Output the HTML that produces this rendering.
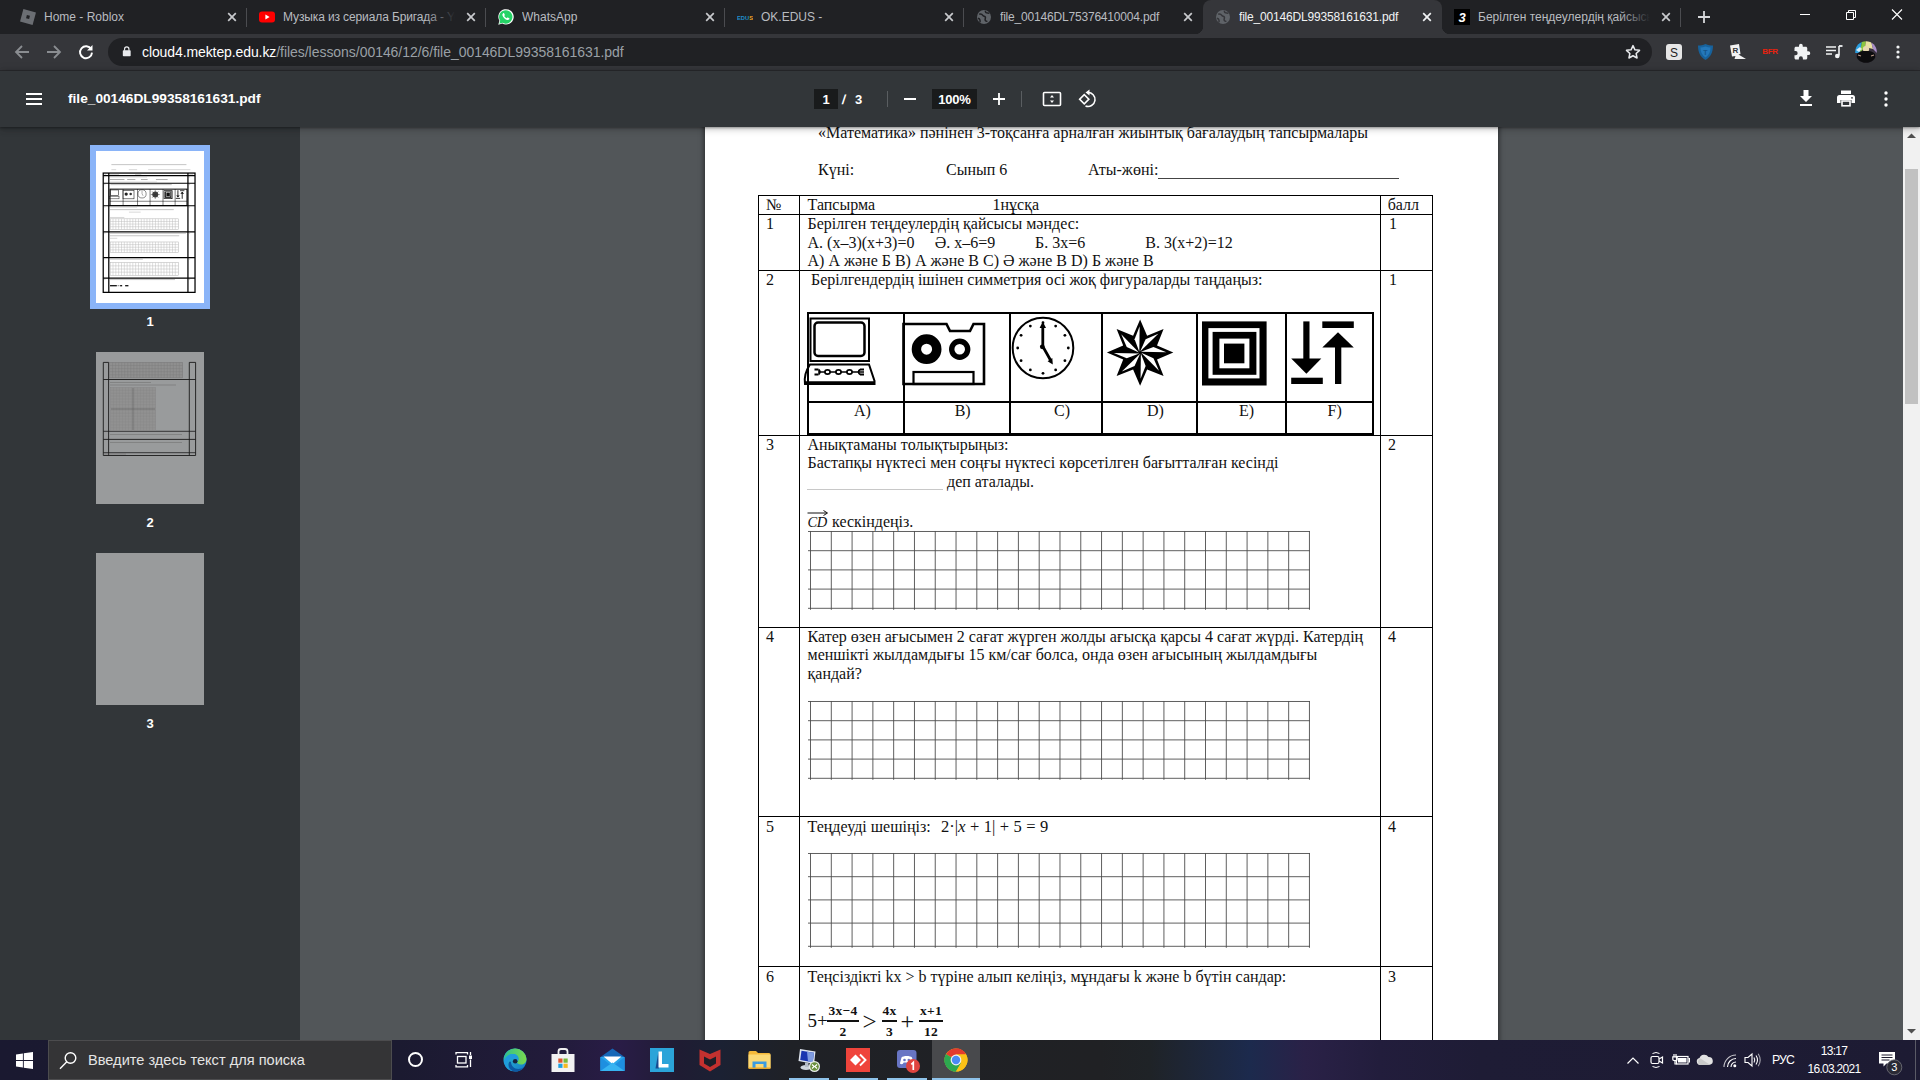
<!DOCTYPE html>
<html><head><meta charset="utf-8">
<style>
*{box-sizing:border-box;margin:0;padding:0}
html,body{width:1920px;height:1080px;overflow:hidden;background:#525659;font-family:"Liberation Sans",sans-serif}
.abs{position:absolute}
#tabstrip{position:absolute;left:0;top:0;width:1920px;height:34px;background:#202124}
#toolbar{position:absolute;left:0;top:34px;width:1920px;height:37px;background:#35363a;border-bottom:1px solid #2a2b2e}
#omni{position:absolute;left:108px;top:4px;width:1544px;height:28px;border-radius:14px;background:#202124}
.tab{position:absolute;top:0;height:34px;width:239px;color:#b9bcc0;font-size:12px;line-height:34px;white-space:nowrap}
.tab .t{position:absolute;left:36px;top:0;width:172px;overflow:hidden;height:34px}
.tab .fade{position:absolute;left:178px;top:0;width:30px;height:34px;background:linear-gradient(90deg,rgba(32,33,36,0),#202124)}
.tab .x{position:absolute;left:218px;top:11px;width:12px;height:12px}
.tab .sep{position:absolute;left:238px;top:8px;width:1px;height:19px;background:#4b4c50}
.tab.act{background:#35363a;border-radius:8px 8px 0 0;color:#f1f3f4}
.tab .fav{position:absolute;left:12px;top:9px;width:16px;height:16px}
#pdfbar{position:absolute;left:0;top:71px;width:1920px;height:56px;background:#323639;box-shadow:0 -2px 8px rgba(0,0,0,.09),0 4px 8px rgba(0,0,0,.06),0 1px 2px rgba(0,0,0,.3),0 2px 6px rgba(0,0,0,.15);z-index:5}
#side{position:absolute;left:0;top:127px;width:300px;height:913px;background:#323639}
#view{position:absolute;left:300px;top:127px;width:1604px;height:913px;background:#525659;overflow:hidden}
#vscroll{position:absolute;left:1903px;top:127px;width:17px;height:913px;background:#f1f1f1}
#page{position:absolute;left:405px;top:-10px;width:793px;height:1000px;background:#fff;box-shadow:0 0 6px 2px rgba(0,0,0,.45)}
#taskbar{position:absolute;left:0;top:1040px;width:1920px;height:40px;z-index:10;background:linear-gradient(90deg,#1a1930 0,#1b1a30 400px,#221b3b 560px,#291c46 620px,#1f1c33 680px,#1b2133 720px,#1f2126 790px,#202124 1100px,#1f2327 1150px,#1c2a4d 1250px,#2a2147 1305px,#221d3c 1380px,#1e1c35 1480px,#1d1b33 1920px)}
.w{color:#fff}
#doc{position:absolute;left:-300px;top:-127px;width:1920px;height:1300px}
.tx{position:absolute;white-space:pre;font-family:"Liberation Serif",serif;font-size:16px;line-height:18px;color:#111}
.fr{text-align:center;font-size:13.500px;font-weight:bold;letter-spacing:0.300px}
</style></head><body>

<div id="tabstrip">
<div class="tab" style="left:8px"><svg class="fav" viewBox="0 0 16 16"><g transform="rotate(15 8 8)"><rect x="1.5" y="1.5" width="13" height="13" fill="#6b6e73"/><rect x="6.400" y="6.400" width="3.200" height="3.200" fill="#202124"/></g></svg><div class="t">Home - Roblox</div><svg class="x" viewBox="0 0 12 12"><path d="M2.2 2.2L9.8 9.8M9.8 2.2L2.2 9.8" stroke="#c8cacd" stroke-width="1.7" fill="none"/></svg><div class="sep"></div></div>
<div class="tab" style="left:247px"><svg class="fav" viewBox="0 0 16 16"><rect x="0" y="2.500" width="16" height="11" rx="3" fill="#f00"/><path d="M6.400 5.500L10.600 8L6.400 10.500z" fill="#fff"/></svg><div class="t" style="letter-spacing:-0.120px">Музыка из сериала Бригада - YouTube</div><div class="fade"></div><svg class="x" viewBox="0 0 12 12"><path d="M2.2 2.2L9.8 9.8M9.8 2.2L2.2 9.8" stroke="#c8cacd" stroke-width="1.7" fill="none"/></svg><div class="sep"></div></div>
<div class="tab" style="left:486px"><svg class="fav" viewBox="0 0 16 16"><path d="M0.300 15.700L1.400 11.800A7.700 7.700 0 1 1 4.300 14.600z" fill="#fff"/><path d="M1.300 14.700L2.200 11.700A6.700 6.700 0 1 1 4.500 13.800z" fill="#25d366"/><path d="M5.200 4.300c.3-.3.800-.3 1 .1l.6 1.300c.1.300 0 .6-.2.800l-.4.400c.5 1 1.300 1.800 2.400 2.400l.5-.5c.2-.2.500-.3.800-.2l1.300.6c.4.200.4.700.1 1-.5.700-1.400 1-2.300.7-2.300-.7-4-2.400-4.600-4.600-.2-.8.200-1.500.8-2z" fill="#fff"/></svg><div class="t">WhatsApp</div><svg class="x" viewBox="0 0 12 12"><path d="M2.2 2.2L9.8 9.8M9.8 2.2L2.2 9.8" stroke="#c8cacd" stroke-width="1.7" fill="none"/></svg><div class="sep"></div></div>
<div class="tab" style="left:725px"><svg class="fav" viewBox="0 0 16 16"><text x="0" y="10.500" font-family="Liberation Sans" font-weight="bold" font-size="5.800" fill="#1f8ecd" textLength="16" lengthAdjust="spacingAndGlyphs">EDU<tspan fill="#f5a623">S</tspan></text></svg><div class="t">OK.EDUS -</div><svg class="x" viewBox="0 0 12 12"><path d="M2.2 2.2L9.8 9.8M9.8 2.2L2.2 9.8" stroke="#c8cacd" stroke-width="1.7" fill="none"/></svg><div class="sep"></div></div>
<div class="tab" style="left:964px"><svg class="fav" viewBox="0 0 16 16"><circle cx="8" cy="8" r="7" fill="#5f6368"/><path d="M3.2 5.2c1.5-.6 3 .2 3.6 1.2.7 1.2 2.2.6 2.6 1.8.3 1-.6 1.8-.2 3 .3.9 1.3 1.2 2.2.9M9.5 1.8c-.4 1 .3 1.800 1.200 2.100 1 .3 1.900-.1 2.500.7M2 9.300c1 .2 1.800.9 2 1.900.1.800-.2 1.500.3 2.200" stroke="#202124" stroke-width="1.500" fill="none"/></svg><div class="t" style="letter-spacing:-0.190px">file_00146DL75376410004.pdf</div><svg class="x" viewBox="0 0 12 12"><path d="M2.2 2.2L9.8 9.8M9.8 2.2L2.2 9.8" stroke="#c8cacd" stroke-width="1.7" fill="none"/></svg></div>
<div class="tab act" style="left:1203px"><div class="abs" style="left:-8px;top:26px;width:8px;height:8px;background:radial-gradient(circle at 0 0,rgba(0,0,0,0) 8px,#35363a 8.500px)"></div><div class="abs" style="left:239px;top:26px;width:8px;height:8px;background:radial-gradient(circle at 100% 0,rgba(0,0,0,0) 8px,#35363a 8.500px)"></div><svg class="fav" viewBox="0 0 16 16"><circle cx="8" cy="8" r="7" fill="#5f6368"/><path d="M3.2 5.2c1.5-.6 3 .2 3.6 1.2.7 1.2 2.2.6 2.6 1.8.3 1-.6 1.8-.2 3 .3.9 1.3 1.2 2.2.9M9.5 1.8c-.4 1 .3 1.800 1.200 2.100 1 .3 1.900-.1 2.500.7M2 9.300c1 .2 1.800.9 2 1.900.1.800-.2 1.500.3 2.200" stroke="#35363a" stroke-width="1.500" fill="none"/></svg><div class="t" style="letter-spacing:-0.190px">file_00146DL99358161631.pdf</div><svg class="x" viewBox="0 0 12 12"><path d="M2.2 2.2L9.8 9.8M9.8 2.2L2.2 9.8" stroke="#f1f3f4" stroke-width="1.7" fill="none"/></svg></div>
<div class="tab" style="left:1442px"><svg class="fav" viewBox="0 0 16 16"><rect width="16" height="16" fill="#000"/><text x="8" y="13" text-anchor="middle" font-family="Liberation Sans" font-weight="bold" font-style="italic" font-size="13" fill="#fff">3</text></svg><div class="t">Берілген теңдеулердің қайсысы мәндес</div><div class="fade"></div><svg class="x" viewBox="0 0 12 12"><path d="M2.2 2.2L9.8 9.8M9.8 2.2L2.2 9.8" stroke="#c8cacd" stroke-width="1.7" fill="none"/></svg><div class="sep"></div></div>
<svg class="abs" style="left:1697px;top:10px" width="14" height="14" viewBox="0 0 14 14"><path d="M7 1v12M1 7h12" stroke="#d5d7da" stroke-width="1.800"/></svg>
<svg class="abs" style="left:1799px;top:9px" width="110" height="12" viewBox="0 0 110 12"><path d="M1 5.500h10" stroke="#fff" stroke-width="1"/><path d="M47.500 3.500h7v7h-7zM49.500 3.500v-2h7v7h-2" stroke="#fff" stroke-width="1" fill="none"/><path d="M93 0.500l10 10M103 0.500l-10 10" stroke="#fff" stroke-width="1.100"/></svg>
</div>
<div id="toolbar"><div id="omni">
<svg class="abs" style="left:13.500px;top:8px" width="9.500" height="11" viewBox="0 0 12 14"><path d="M3.200 6V4a2.800 2.800 0 0 1 5.600 0v2" stroke="#e8eaed" stroke-width="1.500" fill="none"/><rect x="1" y="5.500" width="10" height="7.500" rx="1" fill="#e8eaed"/></svg>
<div class="abs" style="left:34px;top:0;height:28px;line-height:29px;font-size:14px;color:#fff;white-space:nowrap;letter-spacing:-0.100px">cloud4.mektep.edu.kz<span style="color:#9aa0a6;letter-spacing:-0.040px">/files/lessons/00146/12/6/file_00146DL99358161631.pdf</span></div>
<svg class="abs" style="left:1516px;top:5px" width="18" height="18" viewBox="0 0 24 24"><path d="M12 3.500l2.600 5.600 6.100.7-4.500 4.200 1.200 6-5.400-3-5.400 3 1.200-6-4.500-4.200 6.100-.7z" stroke="#e8eaed" stroke-width="2" fill="none" stroke-linejoin="round"/></svg>
</div>
<svg class="abs" style="left:12px;top:9px" width="20" height="18" viewBox="0 0 20 18"><path d="M17 9H4.500M10 3L4 9l6 6" stroke="#8a8d91" stroke-width="1.800" fill="none"/></svg>
<svg class="abs" style="left:44px;top:9px" width="20" height="18" viewBox="0 0 20 18"><path d="M3 9h12.500M10 3l6 6-6 6" stroke="#8a8d91" stroke-width="1.800" fill="none"/></svg>
<svg class="abs" style="left:77px;top:9px" width="18" height="18" viewBox="0 0 18 18"><path d="M14.200 6.200A6 6 0 1 0 15 9.600" stroke="#fff" stroke-width="1.900" fill="none"/><path d="M15.500 2v5.500H10z" fill="#fff"/></svg>
<!-- extensions -->
<svg class="abs" style="left:1666px;top:10px" width="16" height="16" viewBox="0 0 16 16"><rect width="16" height="16" rx="3" fill="#e6e6e6"/><text x="8" y="12.500" text-anchor="middle" font-family="Liberation Sans" font-size="12" fill="#222">S</text></svg>
<svg class="abs" style="left:1697px;top:9px" width="17" height="18" viewBox="0 0 17 18"><path d="M8.500 1c2.500 1.200 5 1.600 7.500 1.600 0 6.500-2 11.400-7.500 14.400C3 14 1 9.100 1 2.600 3.500 2.600 6 2.200 8.500 1z" fill="#17629c"/><path d="M8.500 3.500c1.700.8 3.400 1.100 5 1.100 0 4.500-1.400 7.800-5 9.900-3.600-2.100-5-5.400-5-9.900 1.600 0 3.300-.3 5-1.100z" fill="#2478ba"/><text x="8.500" y="11.500" text-anchor="middle" font-family="Liberation Sans" font-weight="bold" font-size="7" fill="#15558a">T</text></svg>
<svg class="abs" style="left:1729px;top:10px" width="18" height="16" viewBox="0 0 18 16"><path d="M1 1.500l9-1.500 1.500 10-2 .5 7.500 4.500H5.500l1-3-3.500.5z" fill="#f2f2f2"/><text x="3.500" y="9" font-family="Liberation Sans" font-weight="bold" font-size="8" fill="#35363a">R</text></svg>
<div class="abs" style="left:1761px;top:12px;width:18px;font-size:8px;line-height:12px;font-weight:bold;color:#e8220f;letter-spacing:-0.300px;text-align:center">BFR</div>
<svg class="abs" style="left:1793px;top:9px" width="18" height="18" viewBox="0 0 24 24"><path d="M20.500 11H19V7c0-1.100-.9-2-2-2h-4V3.500a2.500 2.500 0 0 0-5 0V5H4c-1.100 0-2 .9-2 2v3.800h1.500a2.700 2.700 0 0 1 0 5.400H2V20c0 1.100.9 2 2 2h3.800v-1.500a2.700 2.700 0 0 1 5.400 0V22H17c1.100 0 2-.9 2-2v-4h1.500a2.500 2.500 0 0 0 0-5z" fill="#f1f3f4"/></svg>
<svg class="abs" style="left:1825px;top:10px" width="18" height="16" viewBox="0 0 18 16"><path d="M1 3h10M1 6.500h10M1 10h6" stroke="#f1f3f4" stroke-width="1.600"/><path d="M14 2v9.500" stroke="#f1f3f4" stroke-width="1.600"/><path d="M14 2h3.500" stroke="#f1f3f4" stroke-width="1.800"/><circle cx="12.300" cy="12" r="2.300" fill="#f1f3f4"/></svg>
<svg class="abs" style="left:1855px;top:7px" width="22" height="22" viewBox="0 0 22 22"><defs><clipPath id="avc"><circle cx="11" cy="11" r="10.800"/></clipPath></defs><g clip-path="url(#avc)"><rect width="22" height="22" fill="#3a3340"/><path d="M0 0h7l-2 12H0z" fill="#2a9fe0"/><path d="M7 0h4l-1 6-5 6z" fill="#8cc63f"/><path d="M11 0h5l2 8-8-2z" fill="#e9e2a0"/><path d="M16 0h6v12l-4-4z" fill="#a98fc8"/><path d="M1 9l4-3 2 2-3 3z" fill="#fff" opacity=".8"/><ellipse cx="11" cy="8" rx="3.200" ry="3" fill="#e8d9b0"/><path d="M2 13c2-2.500 5-3 9-3s7 .5 9 3l1 9H1z" fill="#0c0c0e"/><path d="M3 14l3 1M19 14l-3 1" stroke="#b98" stroke-width="1.200"/></g></svg>
<svg class="abs" style="left:1896px;top:10px" width="4" height="16" viewBox="0 0 4 16"><circle cx="2" cy="3" r="1.600" fill="#f1f3f4"/><circle cx="2" cy="8" r="1.600" fill="#f1f3f4"/><circle cx="2" cy="13" r="1.600" fill="#f1f3f4"/></svg>
</div>
<div id="pdfbar">
<svg class="abs" style="left:26px;top:22px" width="16" height="12" viewBox="0 0 16 12"><path d="M0 1h16M0 6h16M0 11h16" stroke="#fff" stroke-width="2"/></svg>
<div class="abs w" style="left:68px;top:18px;font-size:13.700px;line-height:20px;font-weight:bold;white-space:nowrap" id="ttl">file_00146DL99358161631.pdf</div>
<div class="abs" style="left:814px;top:18px;width:24px;height:20px;background:#191b1c"></div>
<div class="abs w" style="left:814px;top:19px;width:24px;text-align:center;font-size:13px;line-height:20px;font-weight:bold">1</div>
<div class="abs w" style="left:841.500px;top:19px;font-size:13px;line-height:20px;font-weight:bold;transform:skewX(-8deg)">/</div>
<div class="abs w" style="left:855px;top:19px;font-size:13px;line-height:20px;font-weight:bold">3</div>
<div class="abs" style="left:887px;top:20px;width:1px;height:16px;background:#5a5e61"></div>
<div class="abs" style="left:904px;top:27px;width:12px;height:2px;background:#fff"></div>
<div class="abs" style="left:932px;top:18px;width:45px;height:20px;background:#191b1c"></div>
<div class="abs w" style="left:932px;top:18px;width:45px;text-align:center;font-size:13px;line-height:22px;font-weight:bold;letter-spacing:-0.200px">100%</div>
<svg class="abs" style="left:993px;top:22px" width="12" height="12" viewBox="0 0 12 12"><path d="M6 0v12M0 6h12" stroke="#fff" stroke-width="1.800"/></svg>
<div class="abs" style="left:1021px;top:20px;width:1px;height:16px;background:#5a5e61"></div>
<svg class="abs" style="left:1042px;top:20px" width="20" height="16" viewBox="0 0 20 16"><rect x="1.500" y="1.500" width="17" height="13" rx="1" stroke="#fff" stroke-width="1.600" fill="none"/><path d="M10 4l2 2.500H8zM10 12l2-2.500H8z" fill="#fff"/></svg>
<svg class="abs" style="left:1078px;top:17px" width="20" height="21" viewBox="0 0 20 21"><rect x="3" y="8" width="6.500" height="6.500" transform="rotate(-45 6.250 11.250)" stroke="#fff" stroke-width="1.600" fill="none"/><path d="M9.500 4.500a7 7 0 1 1-2 13.500" stroke="#fff" stroke-width="1.600" fill="none"/><path d="M11.500 1.500v6L7.500 4.500z" fill="#fff"/></svg>
<svg class="abs" style="left:1799px;top:19px" width="14" height="17" viewBox="0 0 14 17"><path d="M4.500 0h5v6H13l-6 6-6-6h3.500z" fill="#fff"/><rect x="1" y="14" width="12" height="2" fill="#fff"/></svg>
<svg class="abs" style="left:1837px;top:19px" width="18" height="17" viewBox="0 0 18 17"><rect x="4" y="0.500" width="10" height="3.500" fill="#fff"/><path d="M2.500 5h13A2.500 2.500 0 0 1 18 7.500V13h-3.500v-3h-11v3H0V7.500A2.500 2.500 0 0 1 2.500 5z" fill="#fff"/><rect x="5" y="11" width="8" height="4.800" stroke="#fff" stroke-width="1.600" fill="none"/><circle cx="15" cy="7.800" r="0.900" fill="#323639"/></svg>
<svg class="abs" style="left:1884px;top:20px" width="4" height="16" viewBox="0 0 4 16"><circle cx="2" cy="2" r="1.700" fill="#fff"/><circle cx="2" cy="8" r="1.700" fill="#fff"/><circle cx="2" cy="14" r="1.700" fill="#fff"/></svg>
</div>
<div id="side"><div class="abs" style="left:90px;top:18px;width:120px;height:164px;background:#8ab4f8"></div><div class="abs" style="left:96px;top:24px;width:108px;height:152px;background:#fff"></div><svg class="abs" style="left:96px;top:24px" width="108" height="152" viewBox="96 151 108 152"><g stroke="#000" fill="none"><rect x="103.22" y="173.06" width="91.80" height="119.31" stroke-width="1.250"/><path d="M108.80 173.06V292.38M187.94 173.06V292.38" stroke-width="1.250"/><path d="M103.22 175.65H195.02" stroke-width="1.150"/><path d="M103.22 183.28H195.02" stroke-width="1.150"/><path d="M103.22 205.75H195.02" stroke-width="1.150"/><path d="M103.22 231.90H195.02" stroke-width="1.150"/><path d="M103.22 257.64H195.02" stroke-width="1.150"/><path d="M103.22 278.07H195.02" stroke-width="1.150"/><rect x="110.03" y="189.14" width="76.95" height="16.48" stroke-width="1"/><path d="M110.03 201.26H186.98" stroke-width="0.500"/><path d="M123.10 189.14V205.62" stroke-width="0.500"/><path d="M137.54 189.14V205.62" stroke-width="0.500"/><path d="M150.07 189.14V205.62" stroke-width="0.500"/><path d="M163.01 189.14V205.62" stroke-width="0.500"/><path d="M175.13 189.14V205.62" stroke-width="0.500"/></g><rect x="110.44" y="189.95" width="7.90" height="5.72" fill="none" stroke="#222" stroke-width="0.600"/><rect x="109.62" y="196.22" width="9.40" height="2.59" fill="none" stroke="#222" stroke-width="0.500"/><rect x="122.97" y="190.63" width="11.03" height="8.17" fill="none" stroke="#222" stroke-width="0.600"/><circle cx="126.18" cy="194.04" r="1.63" fill="#222"/><circle cx="130.69" cy="194.04" r="1.23" fill="#333"/><circle cx="142.04" cy="193.90" r="4.09" fill="none" stroke="#222" stroke-width="0.500"/><path d="M142.04 190.77V193.77L143.13 195.81" stroke="#333" stroke-width="0.400" fill="none"/><circle cx="155.25" cy="194.54" r="3.00" fill="#444"/><path d="M150.75 194.54H159.74M155.25 190.09V198.94M152.11 191.45L158.38 197.72M158.38 191.45L152.11 197.72" stroke="#333" stroke-width="0.500"/><rect x="163.69" y="190.28" width="8.80" height="8.72" fill="#111"/><rect x="164.64" y="191.25" width="6.88" height="6.81" fill="none" stroke="#ddd" stroke-width="0.500"/><rect x="166.14" y="192.68" width="3.95" height="3.95" fill="none" stroke="#ddd" stroke-width="0.600"/><path d="M177.91 190.23V197.17M182.21 192.00V198.81" stroke="#111" stroke-width="0.900"/><path d="M175.81 198.40H180.17M180.04 190.70H184.39" stroke="#111" stroke-width="0.800"/><path d="M176.09 195.54H179.76L177.91 197.31ZM180.31 193.77H184.12L182.21 191.86Z" fill="#111"/><path d="M111.39 164.62H186.44" stroke="#a0a0a0" stroke-width="0.6"/><path d="M111.39 169.66H116.16" stroke="#b0b0b0" stroke-width="0.5"/><path d="M128.82 169.66H137.13" stroke="#b0b0b0" stroke-width="0.5"/><path d="M148.16 169.66H190.39" stroke="#b0b0b0" stroke-width="0.5"/><path d="M104.31 174.43H106.22" stroke="#b0b0b0" stroke-width="0.5"/><path d="M109.89 174.43H119.15" stroke="#b0b0b0" stroke-width="0.5"/><path d="M135.09 174.43H141.35" stroke="#b0b0b0" stroke-width="0.5"/><path d="M189.02 174.43H193.11" stroke="#b0b0b0" stroke-width="0.5"/><path d="M109.89 177.01H146.94" stroke="#b0b0b0" stroke-width="0.5"/><path d="M109.89 179.53H124.47" stroke="#8c8c8c" stroke-width="0.7"/><path d="M127.19 179.53H135.36" stroke="#8c8c8c" stroke-width="0.7"/><path d="M140.95 179.53H147.62" stroke="#8c8c8c" stroke-width="0.7"/><path d="M155.93 179.53H167.64" stroke="#8c8c8c" stroke-width="0.7"/><path d="M109.89 182.05H156.88" stroke="#b0b0b0" stroke-width="0.5"/><path d="M110.44 184.64H171.73" stroke="#9c9c9c" stroke-width="0.6"/><path d="M109.89 207.11H137.13" stroke="#b0b0b0" stroke-width="0.5"/><path d="M109.89 209.63H173.77" stroke="#9c9c9c" stroke-width="0.6"/><path d="M128.96 212.15H140.67" stroke="#b0b0b0" stroke-width="0.5"/><path d="M109.89 217.47H124.33" stroke="#b0b0b0" stroke-width="0.5"/><path d="M109.89 233.26H185.89" stroke="#9c9c9c" stroke-width="0.6"/><path d="M109.89 235.78H179.22" stroke="#9c9c9c" stroke-width="0.6"/><path d="M109.89 238.30H117.25" stroke="#b0b0b0" stroke-width="0.5"/><path d="M109.89 259.14H142.85" stroke="#a0a0a0" stroke-width="0.6"/><path d="M109.89 279.57H175.00" stroke="#9c9c9c" stroke-width="0.6"/><path d="M110.03 285.70H116.84" stroke="#111" stroke-width="1.3"/><path d="M117.52 285.70H119.43" stroke="#333" stroke-width="0.6"/><path d="M120.11 285.70H122.15" stroke="#111" stroke-width="1.3"/><path d="M125.15 285.70H128.42" stroke="#111" stroke-width="1.3"/><path d="M104.31 177.01H105.40" stroke="#999" stroke-width="0.5"/><path d="M189.02 177.01H190.11" stroke="#999" stroke-width="0.5"/><path d="M104.31 184.64H105.40" stroke="#999" stroke-width="0.5"/><path d="M189.02 184.64H190.11" stroke="#999" stroke-width="0.5"/><path d="M104.31 207.11H105.40" stroke="#999" stroke-width="0.5"/><path d="M189.02 207.11H190.11" stroke="#999" stroke-width="0.5"/><path d="M104.31 233.26H105.40" stroke="#999" stroke-width="0.5"/><path d="M189.02 233.26H190.11" stroke="#999" stroke-width="0.5"/><path d="M104.31 259.14H105.40" stroke="#999" stroke-width="0.5"/><path d="M189.02 259.14H190.11" stroke="#999" stroke-width="0.5"/><path d="M104.31 279.57H105.40" stroke="#999" stroke-width="0.5"/><path d="M189.02 279.57H190.11" stroke="#999" stroke-width="0.5"/><rect x="110.16" y="218.83" width="68.24" height="10.49" fill="#fff" stroke="#b0b0b0" stroke-width="0.500"/><path d="M113.00 218.83V229.31" stroke="#bcbcbc" stroke-width="0.500"/><path d="M115.83 218.83V229.31" stroke="#bcbcbc" stroke-width="0.500"/><path d="M118.66 218.83V229.31" stroke="#bcbcbc" stroke-width="0.500"/><path d="M121.49 218.83V229.31" stroke="#bcbcbc" stroke-width="0.500"/><path d="M124.32 218.83V229.31" stroke="#bcbcbc" stroke-width="0.500"/><path d="M127.15 218.83V229.31" stroke="#bcbcbc" stroke-width="0.500"/><path d="M129.99 218.83V229.31" stroke="#bcbcbc" stroke-width="0.500"/><path d="M132.82 218.83V229.31" stroke="#bcbcbc" stroke-width="0.500"/><path d="M135.65 218.83V229.31" stroke="#bcbcbc" stroke-width="0.500"/><path d="M138.48 218.83V229.31" stroke="#bcbcbc" stroke-width="0.500"/><path d="M141.31 218.83V229.31" stroke="#bcbcbc" stroke-width="0.500"/><path d="M144.14 218.83V229.31" stroke="#bcbcbc" stroke-width="0.500"/><path d="M146.98 218.83V229.31" stroke="#bcbcbc" stroke-width="0.500"/><path d="M149.81 218.83V229.31" stroke="#bcbcbc" stroke-width="0.500"/><path d="M152.64 218.83V229.31" stroke="#bcbcbc" stroke-width="0.500"/><path d="M155.47 218.83V229.31" stroke="#bcbcbc" stroke-width="0.500"/><path d="M158.30 218.83V229.31" stroke="#bcbcbc" stroke-width="0.500"/><path d="M161.13 218.83V229.31" stroke="#bcbcbc" stroke-width="0.500"/><path d="M163.97 218.83V229.31" stroke="#bcbcbc" stroke-width="0.500"/><path d="M166.80 218.83V229.31" stroke="#bcbcbc" stroke-width="0.500"/><path d="M169.63 218.83V229.31" stroke="#bcbcbc" stroke-width="0.500"/><path d="M172.46 218.83V229.31" stroke="#bcbcbc" stroke-width="0.500"/><path d="M175.29 218.83V229.31" stroke="#bcbcbc" stroke-width="0.500"/><path d="M110.16 221.45H178.40" stroke="#bcbcbc" stroke-width="0.500"/><path d="M110.16 224.07H178.40" stroke="#bcbcbc" stroke-width="0.500"/><path d="M110.16 226.69H178.40" stroke="#bcbcbc" stroke-width="0.500"/><rect x="110.16" y="241.98" width="68.24" height="10.49" fill="#fff" stroke="#b0b0b0" stroke-width="0.500"/><path d="M113.00 241.98V252.47" stroke="#bcbcbc" stroke-width="0.500"/><path d="M115.83 241.98V252.47" stroke="#bcbcbc" stroke-width="0.500"/><path d="M118.66 241.98V252.47" stroke="#bcbcbc" stroke-width="0.500"/><path d="M121.49 241.98V252.47" stroke="#bcbcbc" stroke-width="0.500"/><path d="M124.32 241.98V252.47" stroke="#bcbcbc" stroke-width="0.500"/><path d="M127.15 241.98V252.47" stroke="#bcbcbc" stroke-width="0.500"/><path d="M129.99 241.98V252.47" stroke="#bcbcbc" stroke-width="0.500"/><path d="M132.82 241.98V252.47" stroke="#bcbcbc" stroke-width="0.500"/><path d="M135.65 241.98V252.47" stroke="#bcbcbc" stroke-width="0.500"/><path d="M138.48 241.98V252.47" stroke="#bcbcbc" stroke-width="0.500"/><path d="M141.31 241.98V252.47" stroke="#bcbcbc" stroke-width="0.500"/><path d="M144.14 241.98V252.47" stroke="#bcbcbc" stroke-width="0.500"/><path d="M146.98 241.98V252.47" stroke="#bcbcbc" stroke-width="0.500"/><path d="M149.81 241.98V252.47" stroke="#bcbcbc" stroke-width="0.500"/><path d="M152.64 241.98V252.47" stroke="#bcbcbc" stroke-width="0.500"/><path d="M155.47 241.98V252.47" stroke="#bcbcbc" stroke-width="0.500"/><path d="M158.30 241.98V252.47" stroke="#bcbcbc" stroke-width="0.500"/><path d="M161.13 241.98V252.47" stroke="#bcbcbc" stroke-width="0.500"/><path d="M163.97 241.98V252.47" stroke="#bcbcbc" stroke-width="0.500"/><path d="M166.80 241.98V252.47" stroke="#bcbcbc" stroke-width="0.500"/><path d="M169.63 241.98V252.47" stroke="#bcbcbc" stroke-width="0.500"/><path d="M172.46 241.98V252.47" stroke="#bcbcbc" stroke-width="0.500"/><path d="M175.29 241.98V252.47" stroke="#bcbcbc" stroke-width="0.500"/><path d="M110.16 244.60H178.40" stroke="#bcbcbc" stroke-width="0.500"/><path d="M110.16 247.23H178.40" stroke="#bcbcbc" stroke-width="0.500"/><path d="M110.16 249.85H178.40" stroke="#bcbcbc" stroke-width="0.500"/><rect x="110.16" y="262.68" width="68.24" height="12.67" fill="#fff" stroke="#b0b0b0" stroke-width="0.500"/><path d="M113.00 262.68V275.35" stroke="#bcbcbc" stroke-width="0.500"/><path d="M115.83 262.68V275.35" stroke="#bcbcbc" stroke-width="0.500"/><path d="M118.66 262.68V275.35" stroke="#bcbcbc" stroke-width="0.500"/><path d="M121.49 262.68V275.35" stroke="#bcbcbc" stroke-width="0.500"/><path d="M124.32 262.68V275.35" stroke="#bcbcbc" stroke-width="0.500"/><path d="M127.15 262.68V275.35" stroke="#bcbcbc" stroke-width="0.500"/><path d="M129.99 262.68V275.35" stroke="#bcbcbc" stroke-width="0.500"/><path d="M132.82 262.68V275.35" stroke="#bcbcbc" stroke-width="0.500"/><path d="M135.65 262.68V275.35" stroke="#bcbcbc" stroke-width="0.500"/><path d="M138.48 262.68V275.35" stroke="#bcbcbc" stroke-width="0.500"/><path d="M141.31 262.68V275.35" stroke="#bcbcbc" stroke-width="0.500"/><path d="M144.14 262.68V275.35" stroke="#bcbcbc" stroke-width="0.500"/><path d="M146.98 262.68V275.35" stroke="#bcbcbc" stroke-width="0.500"/><path d="M149.81 262.68V275.35" stroke="#bcbcbc" stroke-width="0.500"/><path d="M152.64 262.68V275.35" stroke="#bcbcbc" stroke-width="0.500"/><path d="M155.47 262.68V275.35" stroke="#bcbcbc" stroke-width="0.500"/><path d="M158.30 262.68V275.35" stroke="#bcbcbc" stroke-width="0.500"/><path d="M161.13 262.68V275.35" stroke="#bcbcbc" stroke-width="0.500"/><path d="M163.97 262.68V275.35" stroke="#bcbcbc" stroke-width="0.500"/><path d="M166.80 262.68V275.35" stroke="#bcbcbc" stroke-width="0.500"/><path d="M169.63 262.68V275.35" stroke="#bcbcbc" stroke-width="0.500"/><path d="M172.46 262.68V275.35" stroke="#bcbcbc" stroke-width="0.500"/><path d="M175.29 262.68V275.35" stroke="#bcbcbc" stroke-width="0.500"/><path d="M110.16 265.85H178.40" stroke="#bcbcbc" stroke-width="0.500"/><path d="M110.16 269.02H178.40" stroke="#bcbcbc" stroke-width="0.500"/><path d="M110.16 272.18H178.40" stroke="#bcbcbc" stroke-width="0.500"/></svg><div class="abs w" style="left:90px;top:187px;width:120px;text-align:center;font-size:13px;line-height:16px;font-weight:bold">1</div><div class="abs" style="left:96px;top:225px;width:108px;height:152px;background:#999b9c"></div><svg class="abs" style="left:96px;top:225px" width="108" height="152" viewBox="0 0 108 152"><g fill="none" stroke="#1a1a1a"><path d="M7.300 10.400V103.500M12.600 10.400V103.500M93.300 10.400V103.500M99.600 10.400V103.500" stroke-width="0.900"/><path d="M7.300 10.400H12.600M93.300 10.400H99.600" stroke-width="0.900"/><path d="M7.300 27.5H99.600" stroke-width="0.9"/><path d="M7.300 79.3H99.600" stroke-width="0.8"/><path d="M7.300 87.4H99.600" stroke-width="0.9"/><path d="M7.300 100.7H99.600" stroke-width="0.8"/><path d="M7.300 103.5H99.600" stroke-width="0.9"/></g><rect x="13.500" y="10.400" width="73" height="15.500" fill="#8f8f8f" stroke="#777" stroke-width="0.500"/><path d="M16.54 10.400V25.900" stroke="#7c7c7c" stroke-width="0.400"/><path d="M19.58 10.400V25.900" stroke="#7c7c7c" stroke-width="0.400"/><path d="M22.62 10.400V25.900" stroke="#7c7c7c" stroke-width="0.400"/><path d="M25.66 10.400V25.900" stroke="#7c7c7c" stroke-width="0.400"/><path d="M28.70 10.400V25.900" stroke="#7c7c7c" stroke-width="0.400"/><path d="M31.74 10.400V25.900" stroke="#7c7c7c" stroke-width="0.400"/><path d="M34.78 10.400V25.900" stroke="#7c7c7c" stroke-width="0.400"/><path d="M37.82 10.400V25.900" stroke="#7c7c7c" stroke-width="0.400"/><path d="M40.86 10.400V25.900" stroke="#7c7c7c" stroke-width="0.400"/><path d="M43.90 10.400V25.900" stroke="#7c7c7c" stroke-width="0.400"/><path d="M46.94 10.400V25.900" stroke="#7c7c7c" stroke-width="0.400"/><path d="M49.98 10.400V25.900" stroke="#7c7c7c" stroke-width="0.400"/><path d="M53.02 10.400V25.900" stroke="#7c7c7c" stroke-width="0.400"/><path d="M56.06 10.400V25.900" stroke="#7c7c7c" stroke-width="0.400"/><path d="M59.10 10.400V25.900" stroke="#7c7c7c" stroke-width="0.400"/><path d="M62.14 10.400V25.900" stroke="#7c7c7c" stroke-width="0.400"/><path d="M65.18 10.400V25.900" stroke="#7c7c7c" stroke-width="0.400"/><path d="M68.22 10.400V25.900" stroke="#7c7c7c" stroke-width="0.400"/><path d="M71.26 10.400V25.900" stroke="#7c7c7c" stroke-width="0.400"/><path d="M74.30 10.400V25.900" stroke="#7c7c7c" stroke-width="0.400"/><path d="M77.34 10.400V25.900" stroke="#7c7c7c" stroke-width="0.400"/><path d="M80.38 10.400V25.900" stroke="#7c7c7c" stroke-width="0.400"/><path d="M83.42 10.400V25.900" stroke="#7c7c7c" stroke-width="0.400"/><path d="M13.500 13.50H86.500" stroke="#7c7c7c" stroke-width="0.400"/><path d="M13.500 16.60H86.500" stroke="#7c7c7c" stroke-width="0.400"/><path d="M13.500 19.70H86.500" stroke="#7c7c7c" stroke-width="0.400"/><path d="M13.500 22.80H86.500" stroke="#7c7c7c" stroke-width="0.400"/><rect x="14.500" y="35.500" width="45" height="43" fill="#919191" stroke="#808080" stroke-width="0.400"/><path d="M17.50 35.500V78.500" stroke="#858585" stroke-width="0.350"/><path d="M20.50 35.500V78.500" stroke="#858585" stroke-width="0.350"/><path d="M23.50 35.500V78.500" stroke="#858585" stroke-width="0.350"/><path d="M26.50 35.500V78.500" stroke="#858585" stroke-width="0.350"/><path d="M29.50 35.500V78.500" stroke="#858585" stroke-width="0.350"/><path d="M32.50 35.500V78.500" stroke="#858585" stroke-width="0.350"/><path d="M35.50 35.500V78.500" stroke="#858585" stroke-width="0.350"/><path d="M38.50 35.500V78.500" stroke="#858585" stroke-width="0.350"/><path d="M41.50 35.500V78.500" stroke="#858585" stroke-width="0.350"/><path d="M44.50 35.500V78.500" stroke="#858585" stroke-width="0.350"/><path d="M47.50 35.500V78.500" stroke="#858585" stroke-width="0.350"/><path d="M50.50 35.500V78.500" stroke="#858585" stroke-width="0.350"/><path d="M53.50 35.500V78.500" stroke="#858585" stroke-width="0.350"/><path d="M56.50 35.500V78.500" stroke="#858585" stroke-width="0.350"/><path d="M14.500 38.37H59.500" stroke="#858585" stroke-width="0.350"/><path d="M14.500 41.24H59.500" stroke="#858585" stroke-width="0.350"/><path d="M14.500 44.11H59.500" stroke="#858585" stroke-width="0.350"/><path d="M14.500 46.98H59.500" stroke="#858585" stroke-width="0.350"/><path d="M14.500 49.85H59.500" stroke="#858585" stroke-width="0.350"/><path d="M14.500 52.72H59.500" stroke="#858585" stroke-width="0.350"/><path d="M14.500 55.59H59.500" stroke="#858585" stroke-width="0.350"/><path d="M14.500 58.46H59.500" stroke="#858585" stroke-width="0.350"/><path d="M14.500 61.33H59.500" stroke="#858585" stroke-width="0.350"/><path d="M14.500 64.20H59.500" stroke="#858585" stroke-width="0.350"/><path d="M14.500 67.07H59.500" stroke="#858585" stroke-width="0.350"/><path d="M14.500 69.94H59.500" stroke="#858585" stroke-width="0.350"/><path d="M14.500 72.81H59.500" stroke="#858585" stroke-width="0.350"/><path d="M14.500 75.68H59.500" stroke="#858585" stroke-width="0.350"/><path d="M37 36V78M15 57H59" stroke="#555" stroke-width="0.500"/><path d="M14 30.500H55M14 33H80M14 82.500H86M14 90.500H86M7.500 102H30" stroke="#6a6a6a" stroke-width="0.500"/></svg><div class="abs w" style="left:90px;top:388px;width:120px;text-align:center;font-size:13px;line-height:16px;font-weight:bold">2</div><div class="abs" style="left:96px;top:426px;width:108px;height:152px;background:#999b9c"></div><div class="abs w" style="left:90px;top:589px;width:120px;text-align:center;font-size:13px;line-height:16px;font-weight:bold">3</div></div><!--/side-->
<div id="view"><div id="doc">
<div class="abs" style="left:705px;top:33px;width:793px;height:1122px;background:#fff;box-shadow:0 0 5px 1px rgba(0,0,0,.5)"></div>
<div class="tx" style="left:818px;top:124.1px;">«Математика» пәнінен 3-тоқсанға арналған жиынтық бағалаудың тапсырмалары</div>
<div class="tx" style="left:818px;top:160.6px;">Күні:</div>
<div class="tx" style="left:946px;top:160.6px;">Сынып 6</div>
<div class="tx" style="left:1088px;top:160.6px;">Аты-жөні:</div>
<div class="tx" style="left:766px;top:195.6px;">№</div>
<div class="tx" style="left:807.5px;top:195.6px;">Тапсырма</div>
<div class="tx" style="left:992.5px;top:195.6px;">1нұсқа</div>
<div class="tx" style="left:1387.7px;top:195.6px;">балл</div>
<div class="tx" style="left:766px;top:214.6px;">1</div>
<div class="tx" style="left:807.5px;top:214.6px;">Берілген теңдеулердің қайсысы мәндес:</div>
<div class="tx" style="left:1389px;top:214.6px;">1</div>
<div class="tx" style="left:807.5px;top:233.8px;">А. (x–3)(x+3)=0</div>
<div class="tx" style="left:934.7px;top:233.8px;">Ә. x–6=9</div>
<div class="tx" style="left:1035px;top:233.8px;">Б. 3x=6</div>
<div class="tx" style="left:1145.3px;top:233.8px;">В. 3(x+2)=12</div>
<div class="tx" style="left:807.5px;top:251.6px;">А) А және Б В) А және В С) Ә және В D) Б және В</div>
<div class="tx" style="left:766px;top:270.6px;">2</div>
<div class="tx" style="left:811px;top:270.6px;">Берілгендердің ішінен симметрия осі жоқ фигураларды таңдаңыз:</div>
<div class="tx" style="left:1389px;top:270.6px;">1</div>
<div class="tx" style="left:854px;top:401.6px;">A)</div>
<div class="tx" style="left:954.7px;top:401.6px;">B)</div>
<div class="tx" style="left:1054px;top:401.6px;">C)</div>
<div class="tx" style="left:1147px;top:401.6px;">D)</div>
<div class="tx" style="left:1239px;top:401.6px;">E)</div>
<div class="tx" style="left:1327.5px;top:401.6px;">F)</div>
<div class="tx" style="left:766px;top:435.6px;">3</div>
<div class="tx" style="left:807.5px;top:435.6px;">Анықтаманы толықтырыңыз:</div>
<div class="tx" style="left:1388px;top:435.6px;">2</div>
<div class="tx" style="left:807.5px;top:454.1px;">Бастапқы нүктесі мен соңғы нүктесі көрсетілген бағытталған кесінді</div>
<div class="tx" style="left:947px;top:472.6px;">деп аталады.</div>
<div class="tx" style="left:832px;top:512.6px;">кескіндеңіз.</div>
<div class="tx" style="left:766px;top:627.9px;">4</div>
<div class="tx" style="left:1388px;top:627.9px;">4</div>
<div class="tx" style="left:807.5px;top:627.9px;">Катер өзен ағысымен 2 сағат жүрген жолды ағысқа қарсы 4 сағат жүрді. Катердің</div>
<div class="tx" style="left:807.5px;top:646.2px;">меншікті жылдамдығы 15 км/сағ болса, онда өзен ағысының жылдамдығы</div>
<div class="tx" style="left:807.5px;top:664.9px;">қандай?</div>
<div class="tx" style="left:766px;top:818.0px;">5</div>
<div class="tx" style="left:1388px;top:818.0px;">4</div>
<div class="tx" style="left:807.5px;top:818.0px;">Теңдеуді шешіңіз:</div>
<div class="tx" style="left:766px;top:968.0px;">6</div>
<div class="tx" style="left:1388px;top:968.0px;">3</div>
<div class="tx" style="left:807.5px;top:968.0px;">Теңсіздікті kx &gt; b түріне алып келіңіз, мұндағы k және b бүтін сандар:</div>
<div class="tx" style="left:941px;top:818.0px;font-size:16.5px;word-spacing:0.300px">2·|<i style="font-size:17px">x</i> + 1| + 5 = 9</div>
<div class="tx" style="left:807.5px;top:512.6px;font-size:14.5px;letter-spacing:-0.3px"><i>CD</i></div>
<svg class="abs" style="left:807px;top:510.300px" width="22" height="6" viewBox="0 0 22 6"><path d="M0.500 3h19" stroke="#111" stroke-width="1"/><path d="M16.500 0.500L20.500 3l-4 2.500" stroke="#111" stroke-width="1" fill="none"/></svg>
<div class="abs" style="left:1158px;top:177.500px;width:241px;height:1px;background:#444"></div>
<div class="abs" style="left:807px;top:489px;width:136px;height:1px;background:#c8c8c8"></div>
<div class="tx" style="left:807.5px;top:1012.3px;font-size:19px">5+</div>
<div class="abs" style="left:827px;top:1020.200px;width:32px;height:1.500px;background:#111"></div><div class="tx fr" style="left:827px;width:32px;top:1001.500px">3x−4</div><div class="tx fr" style="left:827px;width:32px;top:1022.500px">2</div>
<div class="tx" style="left:862.5px;top:1012.8px;font-size:25px">&gt;</div>
<div class="abs" style="left:882px;top:1020.200px;width:15px;height:1.500px;background:#111"></div><div class="tx fr" style="left:882px;width:15px;top:1001.500px">4x</div><div class="tx fr" style="left:882px;width:15px;top:1022.500px">3</div>
<div class="tx" style="left:900.5px;top:1012.4px;font-size:24px">+</div>
<div class="abs" style="left:919px;top:1020.200px;width:24px;height:1.500px;background:#111"></div><div class="tx fr" style="left:919px;width:24px;top:1001.500px">x+1</div><div class="tx fr" style="left:919px;width:24px;top:1022.500px">12</div>
<div class="abs" style="left:758px;top:195px;width:675px;height:1px;background:#000"></div>
<div class="abs" style="left:758px;top:214px;width:675px;height:1px;background:#000"></div>
<div class="abs" style="left:758px;top:270px;width:675px;height:1px;background:#000"></div>
<div class="abs" style="left:758px;top:435px;width:675px;height:1px;background:#000"></div>
<div class="abs" style="left:758px;top:627px;width:675px;height:1px;background:#000"></div>
<div class="abs" style="left:758px;top:816px;width:675px;height:1px;background:#000"></div>
<div class="abs" style="left:758px;top:966px;width:675px;height:1px;background:#000"></div>
<div class="abs" style="left:758px;top:1071px;width:675px;height:1px;background:#000"></div>
<div class="abs" style="left:758px;top:195px;width:1px;height:877px;background:#000"></div>
<div class="abs" style="left:799px;top:195px;width:1px;height:877px;background:#000"></div>
<div class="abs" style="left:1380px;top:195px;width:1px;height:877px;background:#000"></div>
<div class="abs" style="left:1432px;top:195px;width:1px;height:877px;background:#000"></div>
<div class="abs" style="left:807px;top:312px;width:2px;height:123px;background:#000"></div>
<div class="abs" style="left:903px;top:312px;width:2px;height:123px;background:#000"></div>
<div class="abs" style="left:1009px;top:312px;width:2px;height:123px;background:#000"></div>
<div class="abs" style="left:1101px;top:312px;width:2px;height:123px;background:#000"></div>
<div class="abs" style="left:1196px;top:312px;width:2px;height:123px;background:#000"></div>
<div class="abs" style="left:1285px;top:312px;width:2px;height:123px;background:#000"></div>
<div class="abs" style="left:1372px;top:312px;width:2px;height:123px;background:#000"></div>
<div class="abs" style="left:807px;top:312px;width:567px;height:2px;background:#000"></div>
<div class="abs" style="left:807px;top:400.8px;width:567px;height:2px;background:#000"></div>
<div class="abs" style="left:807px;top:433px;width:567px;height:2px;background:#000"></div>
<svg class="abs" style="left:806px;top:528.5px" width="506" height="82.8" viewBox="0 0 506 82.8"><g stroke="#4d4d4d" stroke-width="0.900" fill="none"><path d="M4.50 2v78.8"/><path d="M25.29 2v78.8"/><path d="M46.08 2v78.8"/><path d="M66.87 2v78.8"/><path d="M87.66 2v78.8"/><path d="M108.45 2v78.8"/><path d="M129.24 2v78.8"/><path d="M150.03 2v78.8"/><path d="M170.82 2v78.8"/><path d="M191.61 2v78.8"/><path d="M212.40 2v78.8"/><path d="M233.19 2v78.8"/><path d="M253.98 2v78.8"/><path d="M274.77 2v78.8"/><path d="M295.56 2v78.8"/><path d="M316.35 2v78.8"/><path d="M337.14 2v78.8"/><path d="M357.93 2v78.8"/><path d="M378.72 2v78.8"/><path d="M399.51 2v78.8"/><path d="M420.30 2v78.8"/><path d="M441.09 2v78.8"/><path d="M461.88 2v78.8"/><path d="M482.67 2v78.8"/><path d="M503.46 2v78.8"/><path d="M2 2.50h502"/><path d="M2 21.70h502"/><path d="M2 40.90h502"/><path d="M2 60.10h502"/><path d="M2 79.30h502"/></g></svg>
<svg class="abs" style="left:806px;top:698.5px" width="506" height="82.8" viewBox="0 0 506 82.8"><g stroke="#4d4d4d" stroke-width="0.900" fill="none"><path d="M4.50 2v78.8"/><path d="M25.29 2v78.8"/><path d="M46.08 2v78.8"/><path d="M66.87 2v78.8"/><path d="M87.66 2v78.8"/><path d="M108.45 2v78.8"/><path d="M129.24 2v78.8"/><path d="M150.03 2v78.8"/><path d="M170.82 2v78.8"/><path d="M191.61 2v78.8"/><path d="M212.40 2v78.8"/><path d="M233.19 2v78.8"/><path d="M253.98 2v78.8"/><path d="M274.77 2v78.8"/><path d="M295.56 2v78.8"/><path d="M316.35 2v78.8"/><path d="M337.14 2v78.8"/><path d="M357.93 2v78.8"/><path d="M378.72 2v78.8"/><path d="M399.51 2v78.8"/><path d="M420.30 2v78.8"/><path d="M441.09 2v78.8"/><path d="M461.88 2v78.8"/><path d="M482.67 2v78.8"/><path d="M503.46 2v78.8"/><path d="M2 2.50h502"/><path d="M2 21.70h502"/><path d="M2 40.90h502"/><path d="M2 60.10h502"/><path d="M2 79.30h502"/></g></svg>
<svg class="abs" style="left:806px;top:851.3px" width="506" height="98.8" viewBox="0 0 506 98.8"><g stroke="#4d4d4d" stroke-width="0.900" fill="none"><path d="M4.50 2v94.8"/><path d="M25.29 2v94.8"/><path d="M46.08 2v94.8"/><path d="M66.87 2v94.8"/><path d="M87.66 2v94.8"/><path d="M108.45 2v94.8"/><path d="M129.24 2v94.8"/><path d="M150.03 2v94.8"/><path d="M170.82 2v94.8"/><path d="M191.61 2v94.8"/><path d="M212.40 2v94.8"/><path d="M233.19 2v94.8"/><path d="M253.98 2v94.8"/><path d="M274.77 2v94.8"/><path d="M295.56 2v94.8"/><path d="M316.35 2v94.8"/><path d="M337.14 2v94.8"/><path d="M357.93 2v94.8"/><path d="M378.72 2v94.8"/><path d="M399.51 2v94.8"/><path d="M420.30 2v94.8"/><path d="M441.09 2v94.8"/><path d="M461.88 2v94.8"/><path d="M482.67 2v94.8"/><path d="M503.46 2v94.8"/><path d="M2 2.50h502"/><path d="M2 25.70h502"/><path d="M2 48.90h502"/><path d="M2 72.10h502"/><path d="M2 95.30h502"/></g></svg>
<!--FIGS--><svg class="abs" style="left:800px;top:310px" width="580" height="130" viewBox="800 310 580 130"><g fill="none" stroke="#000"><rect x="810.500" y="318.500" width="58.500" height="42.500" stroke-width="2"/><rect x="814.500" y="322.500" width="50" height="33.500" rx="3.500" stroke-width="2.500"/><path d="M810 364.500H869L874.500 381V384H805Q803.500 374 810 364.500Z" stroke-width="2"/><path d="M805 382.500H874" stroke-width="2.600"/><path d="M814.500 369.500h4M814.500 374.500h4M860 369.500h4M860 374.500h4" stroke-width="1.900"/><path d="M818 372h46" stroke-width="1.600"/><ellipse cx="827.5" cy="372" rx="2.600" ry="2.200" fill="#fff" stroke-width="1.700"/><ellipse cx="838.5" cy="372" rx="2.600" ry="2.200" fill="#fff" stroke-width="1.700"/><ellipse cx="849.5" cy="372" rx="2.600" ry="2.200" fill="#fff" stroke-width="1.700"/><path d="M818.500 369.500q3 2.500 0 5M860 369.500q-3 2.500 0 5" stroke-width="1.700"/></g><path d="M903.500 324H946.500L950 331H970L973.500 324H984V384H903.500Z" fill="none" stroke="#000" stroke-width="2.600"/><circle cx="926.600" cy="349.200" r="10.200" fill="none" stroke="#000" stroke-width="9.400"/><circle cx="959.700" cy="349.200" r="8" fill="none" stroke="#000" stroke-width="5.400"/><rect x="913.500" y="372" width="60" height="12" fill="none" stroke="#000" stroke-width="2.200"/><circle cx="1043" cy="348" r="30.300" fill="none" stroke="#000" stroke-width="2"/><circle cx="1043.00" cy="322.70" r="1.400" fill="#000"/><circle cx="1055.65" cy="326.09" r="1.400" fill="#000"/><circle cx="1064.91" cy="335.35" r="1.400" fill="#000"/><circle cx="1068.30" cy="348.00" r="1.400" fill="#000"/><circle cx="1064.91" cy="360.65" r="1.400" fill="#000"/><circle cx="1055.65" cy="369.91" r="1.400" fill="#000"/><circle cx="1043.00" cy="373.30" r="1.400" fill="#000"/><circle cx="1030.35" cy="369.91" r="1.400" fill="#000"/><circle cx="1021.09" cy="360.65" r="1.400" fill="#000"/><circle cx="1017.70" cy="348.00" r="1.400" fill="#000"/><circle cx="1021.09" cy="335.35" r="1.400" fill="#000"/><circle cx="1030.35" cy="326.09" r="1.400" fill="#000"/><path d="M1042.800 326V346.500L1051 361" fill="none" stroke="#000" stroke-width="2.800"/><path d="M1042.800 321.500l3.200 6.500h-6.400z" fill="#000"/><path d="M1052.800 364.500l-5.200-3.200 4.700-3.300z" fill="#000"/><circle cx="1042.300" cy="346.800" r="2.400" fill="#000"/><path d="M1140.10 319.40L1147.10 335.69L1163.58 329.12L1157.01 345.60L1173.30 352.60L1157.01 359.60L1163.58 376.08L1147.10 369.51L1140.10 385.80L1133.10 369.51L1116.62 376.08L1123.19 359.60L1106.90 352.60L1123.19 345.60L1116.62 329.12L1133.10 335.69Z" fill="#000"/><path d="M1139.31 351.77L1134.57 339.24L1139.65 326.37Z" fill="#fff"/><path d="M1140.13 351.45L1145.63 339.24L1158.33 333.74Z" fill="#fff"/><path d="M1140.93 351.81L1153.46 347.07L1166.33 352.15Z" fill="#fff"/><path d="M1141.25 352.63L1153.46 358.13L1158.96 370.83Z" fill="#fff"/><path d="M1140.89 353.43L1145.63 365.96L1140.55 378.83Z" fill="#fff"/><path d="M1140.07 353.75L1134.57 365.96L1121.87 371.46Z" fill="#fff"/><path d="M1139.27 353.39L1126.74 358.13L1113.87 353.05Z" fill="#fff"/><path d="M1138.95 352.57L1126.74 347.07L1121.24 334.37Z" fill="#fff"/><rect x="1202" y="321.400" width="64.600" height="64.100" fill="#000"/><rect x="1208.400" y="328.100" width="51.100" height="50.300" fill="#fff"/><rect x="1212.600" y="331.900" width="43.800" height="42.900" fill="#000"/><rect x="1219.400" y="338.600" width="30" height="29.700" fill="#fff"/><rect x="1224" y="343.600" width="20.400" height="19.700" fill="#000"/><rect x="1303.300" y="321.400" width="6.200" height="39" fill="#000"/><path d="M1291.200 358.500H1321.300L1306.400 373.800Z" fill="#000"/><rect x="1291.200" y="377.700" width="31.600" height="6.300" fill="#000"/><rect x="1322.300" y="321.400" width="31.500" height="6.600" fill="#000"/><path d="M1338 332.300L1353.800 347.500H1322.300Z" fill="#000"/><rect x="1335" y="346" width="6.300" height="38" fill="#000"/></svg><!--/FIGS-->
</div></div><!--/view-->
<div id="vscroll"><svg class="abs" style="left:4px;top:6px" width="9" height="5" viewBox="0 0 9 5"><path d="M0 5L4.500 0.500L9 5z" fill="#505050"/></svg><div class="abs" style="left:2px;top:42px;width:13px;height:235px;background:#c1c1c1"></div><svg class="abs" style="left:4px;top:902px" width="9" height="5" viewBox="0 0 9 5"><path d="M0 0L4.500 4.500L9 0z" fill="#505050"/></svg></div><!--/vs-->
<div id="taskbar"><div class="abs" style="left:48px;top:0;width:344px;height:40px;background:#343436;border:1px solid #4c4c4e"></div><svg class="abs" style="left:16px;top:12px" width="17" height="17" viewBox="0 0 17 17"><path d="M0 2.400L6.900 1.400V8H0zM7.800 1.300L17 0V8H7.800zM0 8.900H6.900V15.500L0 14.500zM7.800 8.900H17V17L7.800 15.700z" fill="#fff"/></svg><svg class="abs" style="left:59px;top:11px" width="19" height="19" viewBox="0 0 19 19"><circle cx="11.500" cy="7" r="5.300" stroke="#fff" stroke-width="1.400" fill="none"/><path d="M7.800 10.800L1 17.800" stroke="#fff" stroke-width="1.400"/></svg><div class="abs" style="left:88px;top:10px;font-size:14.600px;line-height:20px;color:#e4e4e4;white-space:nowrap" id="srch">Введите здесь текст для поиска</div><div class="abs" style="left:408px;top:12px;width:15.400px;height:15.400px;border-radius:50%;border:2px solid #fff"></div><svg class="abs" style="left:455px;top:12px" width="18" height="16" viewBox="0 0 18 16"><g stroke="#fff" stroke-width="1.300" fill="none"><rect x="2.500" y="4.500" width="8.500" height="6.500"/><path d="M1 2.500V0.700H12.500V2.500M1 13V14.800H12.500V13"/><path d="M15.500 0V3M15.500 7.500V15"/></g><rect x="14" y="3.500" width="3" height="3.500" fill="#fff"/></svg><svg class="abs" style="left:503px;top:8px" width="24" height="24" viewBox="0 0 24 24"><defs><linearGradient id="eg1" x1="0" y1="0" x2="1" y2="1"><stop offset="0" stop-color="#2bc3d2"/><stop offset="1" stop-color="#1577c9"/></linearGradient><linearGradient id="eg2" x1="0" y1="0" x2="1" y2="0"><stop offset="0" stop-color="#2fbf8f"/><stop offset="1" stop-color="#7bd94c"/></linearGradient></defs><circle cx="12" cy="12" r="11.500" fill="url(#eg1)"/><path d="M12 0.500A11.500 11.500 0 0 1 23.500 11c0 3.500-2.500 5.500-5.500 5.500-2.500 0-4-1.200-4-2.700 1-.8 1.500-1.800 1.500-3C15.500 8 13 6 10 6 6.500 6 3 8.500 1 12A11.500 11.500 0 0 1 12 0.500z" fill="url(#eg2)"/><path d="M1 13c1-4 4.500-7 9-7 3 0 5.500 2 5.500 4.800 0 1.200-.5 2.200-1.500 3-.3-2-2-3.300-4-3.300-3.300 0-5.500 2.500-5.500 5.700 0 3 2 5.800 5 6.800A11.500 11.500 0 0 1 1 13z" fill="#1f9bde"/><path d="M8 14c0 3.500 2.800 7 7.500 7 2 0 4-.8 5.500-2-1.500 2.800-5 4.500-8.500 4.500-4 0-7-3-7-7 0-2.500 1.500-4 2.500-2.500z" fill="#0c59a4"/><circle cx="12.200" cy="13.200" r="2.300" fill="#16243e"/></svg><svg class="abs" style="left:551px;top:7px" width="24" height="26" viewBox="0 0 24 26"><path d="M7.500 7V4.500A2.500 2.500 0 0 1 10 2h4a2.500 2.500 0 0 1 2.500 2.500V7" stroke="#f0f0f0" stroke-width="1.800" fill="none"/><rect x="0.500" y="7" width="23" height="18" fill="#f2f2f2"/><rect x="7.300" y="11.500" width="4.200" height="4.200" fill="#e0552e"/><rect x="12.500" y="11.500" width="4.200" height="4.200" fill="#78b93a"/><rect x="7.300" y="16.700" width="4.200" height="4.200" fill="#1ea0e0"/><rect x="12.500" y="16.700" width="4.200" height="4.200" fill="#f6b820"/></svg><svg class="abs" style="left:600px;top:8px" width="25" height="24" viewBox="0 0 25 24"><path d="M0.500 9L12.500 0.500L24.500 9V23H0.500z" fill="#1667b7"/><path d="M0.500 9h24v14h-24z" fill="#2aa6ea"/><path d="M0.500 9L12.500 18.500L24.500 9V23H0.500z" fill="#1e8fe0"/><path d="M3.500 8.500H21.500L12.500 16z" fill="#fff"/><path d="M0.500 23L12.500 14.500L24.500 23z" fill="#37b4f2"/></svg><svg class="abs" style="left:650px;top:8px" width="24" height="24" viewBox="0 0 24 24"><rect width="24" height="24" fill="#2ba4d9"/><path d="M8.500 3.500L5.500 20.500H9z" fill="#174b8f"/><path d="M8.500 3.500h3.500v12.500h6.500V19.500H8.500z" fill="#fff"/></svg><svg class="abs" style="left:699px;top:8px" width="22" height="24" viewBox="0 0 22 24"><path d="M0.500 1.500L11 6L21.500 1.500V17L11 23.500L0.500 17z" fill="#c4312f"/><path d="M5 8.500L11 11.500L17 8.500V15.500L11 19L5 15.500z" fill="#1e1e28"/></svg><svg class="abs" style="left:748px;top:10px" width="23" height="20" viewBox="0 0 23 20"><path d="M0.500 2.500A1.500 1.500 0 0 1 2 1h6l2 2h11a1.500 1.500 0 0 1 1.500 1.500V18H0.500z" fill="#f5b93a"/><rect x="0.500" y="4.500" width="22" height="13.500" fill="#fbd976"/><path d="M4.500 11.500h14V19h-14z" fill="#3b9be0"/><path d="M7.500 14h8v5h-8z" fill="#fbd976"/><rect x="0.500" y="17.500" width="22" height="1.500" fill="#e5a52a"/></svg><svg class="abs" style="left:797px;top:8px" width="25" height="25" viewBox="0 0 25 25"><path d="M3 1L18.500 3.500L17 16L1.500 13z" fill="#dfe5ef"/><path d="M4.500 2.800L17 4.800L15.800 14.200L3.200 12z" fill="#1a35b0"/><path d="M10 3.700L17 4.800L15.800 14.200L11 13.400z" fill="#7f9be0"/><ellipse cx="9" cy="19.500" rx="5.500" ry="2.600" fill="#cfd5dc"/><path d="M8 14.500h3.500v4.500H8z" fill="#b4bcc6"/><circle cx="17.500" cy="18.500" r="5.500" fill="#e8ece8"/><circle cx="17.500" cy="18.500" r="4.300" fill="#6a8f3c"/><path d="M15 16.500l2.200 2-2.200 2M20 16.500l-2.200 2 2.200 2" stroke="#fff" stroke-width="1.100" fill="none"/></svg><svg class="abs" style="left:846px;top:8px" width="24" height="24" viewBox="0 0 24 24"><rect width="24" height="24" fill="#ef443b"/><path d="M9.500 6.500L15 12L9.500 17.500L4 12z" fill="#fff"/><path d="M14 6.500L19.500 12L14 17.500" stroke="#fff" stroke-width="1.900" fill="none"/></svg><svg class="abs" style="left:896px;top:8px" width="26" height="26" viewBox="0 0 26 26"><rect x="1" y="2" width="19.500" height="18" rx="3" fill="#6875c4"/><path d="M5.500 9.500c1.500-2 9-2 10.500 0l1.500 6c-1 1-2.500 1-3 .3l-.8-1.300h-6l-.8 1.300c-.5.700-2 .7-3-.3z" fill="#fff"/><circle cx="8.500" cy="12" r="1.300" fill="#6875c4"/><circle cx="12.800" cy="12" r="1.300" fill="#6875c4"/><circle cx="17" cy="18" r="7" fill="#e0443e"/><path d="M15.300 16.300L17.300 14.500V22" stroke="#fff" stroke-width="1.700" fill="none"/></svg><div class="abs" style="left:932px;top:0;width:48px;height:40px;background:#48494c"></div><svg class="abs" style="left:944px;top:8px" width="24" height="24" viewBox="0 0 24 24"><circle cx="12" cy="12" r="11.500" fill="#fbc116"/><path d="M12 12L2.040 6.250A11.500 11.500 0 0 1 21.960 6.250z" fill="#e33b2e"/><path d="M12 0.500A11.500 11.500 0 0 1 21.960 6.250H12z" fill="#e33b2e"/><path d="M2.040 6.250A11.500 11.500 0 0 0 12 23.500L17 15 12 12z" fill="#2da94f"/><path d="M2.040 6.250L7.500 15L12 23.500A11.500 11.500 0 0 1 2.040 6.250z" fill="#2da94f"/><path d="M21.960 6.250H12L17 15L12 23.500A11.500 11.500 0 0 0 21.960 6.250z" fill="#fbc116"/><circle cx="12" cy="12" r="5.400" fill="#f1f1f1"/><circle cx="12" cy="12" r="4.200" fill="#4a8af4"/></svg><div class="abs" style="left:789px;top:38px;width:40px;height:2px;background:#8fc3ea"></div><div class="abs" style="left:838px;top:38px;width:40px;height:2px;background:#8fc3ea"></div><div class="abs" style="left:887px;top:38px;width:40px;height:2px;background:#8fc3ea"></div><div class="abs" style="left:932px;top:38px;width:48px;height:2px;background:#8fc3ea"></div><svg class="abs" style="left:1627px;top:17px" width="12" height="7" viewBox="0 0 12 7"><path d="M0.500 6.500L6 1L11.500 6.500" stroke="#fff" stroke-width="1.200" fill="none"/></svg><svg class="abs" style="left:1650px;top:11px" width="14" height="18" viewBox="0 0 14 18"><g stroke="#fff" stroke-width="1.200" fill="none"><rect x="1" y="5.500" width="8" height="7" rx="1.500"/><path d="M9 8l3.500-2v6L9 10"/><path d="M2.500 2.500q3.500-2 7 0M2.500 15.500q3.500 2 7 0" stroke-width="1"/></g></svg><svg class="abs" style="left:1672px;top:14px" width="18" height="12" viewBox="0 0 18 12"><g stroke="#fff" stroke-width="1.200" fill="none"><rect x="4.500" y="2.500" width="11.500" height="7.500"/><path d="M16.500 4.500h1v3.500h-1"/><path d="M2 0v2.500M4 0v2.500M0.800 2.800h4.400v2.400q0 1.500-2.200 1.500t-2.200-1.500zM3 6.800V10h1.500"/></g><rect x="6" y="4" width="8.500" height="4.500" fill="#fff"/></svg><svg class="abs" style="left:1696px;top:14px" width="18" height="12" viewBox="0 0 18 12"><path d="M4 11a3.500 3.500 0 0 1-.5-6.900A5 5 0 0 1 12.500 3a4 4 0 0 1 1.500 7.800z" fill="#e2e2e2"/><path d="M4 11a3.500 3.500 0 0 1 .5-6.500L14 10.800z" fill="#c9c9c9"/></svg><svg class="abs" style="left:1723px;top:14px" width="14" height="14" viewBox="0 0 14 14"><g stroke="#fff" stroke-width="1.100" fill="none"><path d="M1 13A12 12 0 0 1 13 1" opacity=".75"/><path d="M4.500 13A8.500 8.500 0 0 1 13 4.500"/><path d="M8 13A5 5 0 0 1 13 8"/></g><circle cx="11.800" cy="11.800" r="1.500" fill="#fff"/></svg><svg class="abs" style="left:1744px;top:12px" width="18" height="16" viewBox="0 0 18 16"><g stroke="#fff" stroke-width="1.100" fill="none"><path d="M1 5.500h3L8 2v12L4 10.500H1z"/><path d="M10 5.500q1.500 2.500 0 5M12 3.500q3 4.500 0 9"/><path d="M14.200 1.800q4 6.200 0 12.400" opacity=".6"/></g></svg><div class="abs" style="left:1772px;top:10px;font-size:12.300px;line-height:20px;color:#fff;letter-spacing:-0.900px">РУС</div><div class="abs" style="left:1808px;top:3px;width:52px;text-align:center;font-size:12px;line-height:17px;color:#fff;white-space:nowrap;letter-spacing:-0.700px" id="clk">13:17</div><div class="abs" style="left:1804px;top:20.500px;width:60px;text-align:center;font-size:12px;line-height:17px;color:#fff;white-space:nowrap;letter-spacing:-0.730px" id="dt">16.03.2021</div><svg class="abs" style="left:1878px;top:11px" width="26" height="26" viewBox="0 0 26 26"><path d="M1 1h16v11.500H8.500L5.500 15.500V12.500H1z" fill="#fff"/><path d="M3.500 4h11M3.500 6.500h11M3.500 9h8" stroke="#1c1b2e" stroke-width="1"/><circle cx="16.300" cy="16.300" r="7.500" fill="#2a2a35" stroke="#77777f" stroke-width="0.800"/><text x="16.300" y="20.300" text-anchor="middle" font-family="Liberation Sans" font-size="11" fill="#fff">3</text></svg><div class="abs" style="left:1915px;top:0;width:1px;height:40px;background:#5a5a66"></div></div><!--/tb-->

</body></html>
